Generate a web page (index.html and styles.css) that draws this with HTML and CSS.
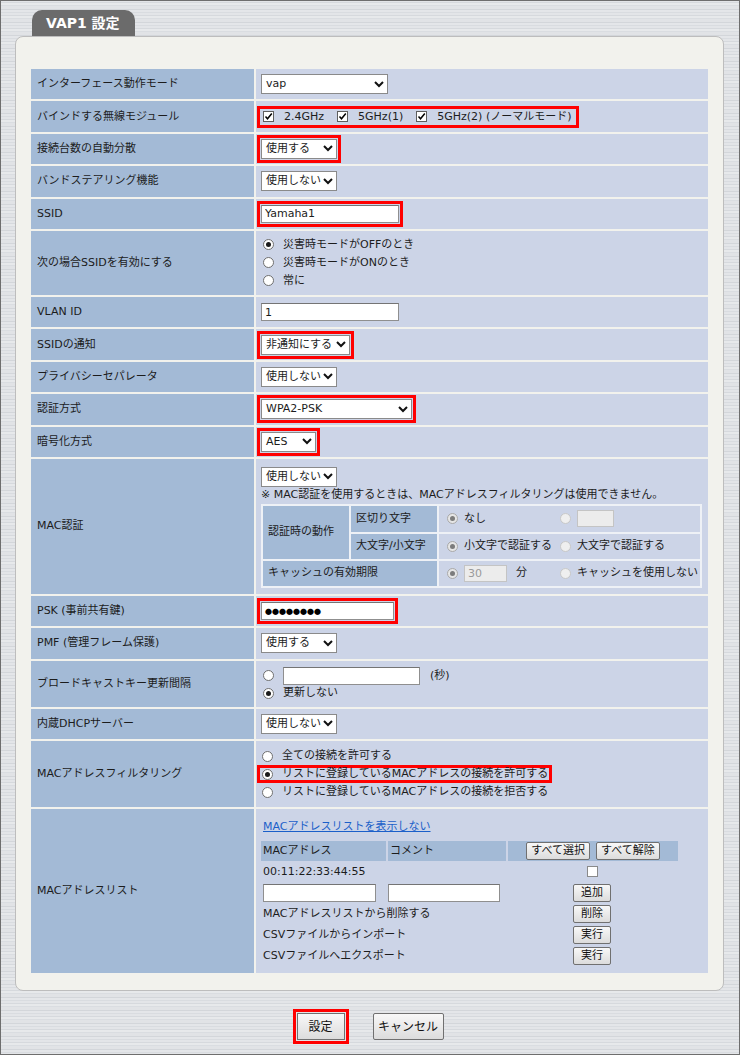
FILE: index.html
```html
<!DOCTYPE html>
<html lang="ja">
<head>
  <meta charset="UTF-8">
  <meta name="viewport" content="width=device-width, initial-scale=1">
  <title>VAP1 設定</title>
  <link rel="stylesheet" href="styles.css">
</head>
<body>

  <!-- タイトル -->
  <div class="tab">VAP1 設定</div>

  <div class="panel">
    <table class="form">
      <tr>
        <th>インターフェース動作モード</th>
        <td><span class="sel w127"><span>vap</span><svg class="chev" width="10" height="7" viewBox="0 0 10 7"><polyline points="1,1 5,5 9,1"/></svg></span></td>
      </tr>
      <tr>
        <th>バインドする無線モジュール</th>
        <td>
          <span class="group hl">
            <label class="chk"><span class="cb"><svg width="9" height="9" viewBox="0 0 9 9"><path d="M1.5 4.5 L3.5 6.8 L7.8 1.5"/></svg></span>2.4GHz</label>
            <label class="chk"><span class="cb"><svg width="9" height="9" viewBox="0 0 9 9"><path d="M1.5 4.5 L3.5 6.8 L7.8 1.5"/></svg></span>5GHz(1)</label>
            <label class="chk"><span class="cb"><svg width="9" height="9" viewBox="0 0 9 9"><path d="M1.5 4.5 L3.5 6.8 L7.8 1.5"/></svg></span>5GHz(2) (ノーマルモード)</label>
          </span>
        </td>
      </tr>
      <tr>
        <th>接続台数の自動分散</th>
        <td><span class="sel w76 hl"><span>使用する</span><svg class="chev" width="10" height="7" viewBox="0 0 10 7"><polyline points="1,1 5,5 9,1"/></svg></span></td>
      </tr>
      <tr>
        <th>バンドステアリング機能</th>
        <td><span class="sel w76"><span>使用しない</span><svg class="chev" width="10" height="7" viewBox="0 0 10 7"><polyline points="1,1 5,5 9,1"/></svg></span></td>
      </tr>
      <tr>
        <th>SSID</th>
        <td><input class="txt w138 hl" type="text" value="Yamaha1"></td>
      </tr>
      <tr>
        <th>次の場合SSIDを有効にする</th>
        <td class="multi">
          <div class="opt"><span class="rb on"></span>災害時モードがOFFのとき</div>
          <div class="opt"><span class="rb"></span>災害時モードがONのとき</div>
          <div class="opt"><span class="rb"></span>常に</div>
        </td>
      </tr>
      <tr>
        <th>VLAN ID</th>
        <td><input class="txt w138" type="text" value="1"></td>
      </tr>
      <tr>
        <th>SSIDの通知</th>
        <td><span class="sel w89 hl"><span>非通知にする</span><svg class="chev" width="10" height="7" viewBox="0 0 10 7"><polyline points="1,1 5,5 9,1"/></svg></span></td>
      </tr>
      <tr>
        <th>プライバシーセパレータ</th>
        <td><span class="sel w76"><span>使用しない</span><svg class="chev" width="10" height="7" viewBox="0 0 10 7"><polyline points="1,1 5,5 9,1"/></svg></span></td>
      </tr>
      <tr>
        <th>認証方式</th>
        <td><span class="sel w151 hl"><span>WPA2-PSK</span><svg class="chev" width="10" height="7" viewBox="0 0 10 7"><polyline points="1,1 5,5 9,1"/></svg></span></td>
      </tr>
      <tr>
        <th>暗号化方式</th>
        <td><span class="sel w55 hl"><span>AES</span><svg class="chev" width="10" height="7" viewBox="0 0 10 7"><polyline points="1,1 5,5 9,1"/></svg></span></td>
      </tr>
      <tr>
        <th>MAC認証</th>
        <td class="mac-auth">
          <span class="sel w76"><span>使用しない</span><svg class="chev" width="10" height="7" viewBox="0 0 10 7"><polyline points="1,1 5,5 9,1"/></svg></span>
          <p class="note">※ MAC認証を使用するときは、MACアドレスフィルタリングは使用できません。</p>
          <table class="sub">
            <tr class="first">
              <th class="c1" rowspan="2">認証時の動作</th>
              <th class="c2">区切り文字</th>
              <td>
                <div class="pair">
                  <span class="opt2"><span class="rb dis on"></span>なし</span>
                  <span class="opt2"><span class="rb dis"></span><input class="txt dis w37" type="text" disabled></span>
                </div>
              </td>
            </tr>
            <tr>
              <th class="c2">大文字/小文字</th>
              <td>
                <div class="pair">
                  <span class="opt2"><span class="rb dis on"></span>小文字で認証する</span>
                  <span class="opt2"><span class="rb dis"></span>大文字で認証する</span>
                </div>
              </td>
            </tr>
            <tr>
              <th colspan="2">キャッシュの有効期限</th>
              <td>
                <div class="pair">
                  <span class="opt2"><span class="rb dis on"></span><input class="txt dis w43" type="text" value="30" disabled><span class="unit">分</span></span>
                  <span class="opt2"><span class="rb dis"></span>キャッシュを使用しない</span>
                </div>
              </td>
            </tr>
          </table>
        </td>
      </tr>
      <tr>
        <th>PSK (事前共有鍵)</th>
        <td><span class="txt w133 hl pass"><span class="dots">●●●●●●●●</span></span></td>
      </tr>
      <tr>
        <th>PMF (管理フレーム保護)</th>
        <td><span class="sel w76"><span>使用する</span><svg class="chev" width="10" height="7" viewBox="0 0 10 7"><polyline points="1,1 5,5 9,1"/></svg></span></td>
      </tr>
      <tr>
        <th>ブロードキャストキー更新間隔</th>
        <td class="rekey">
          <div class="opt tall"><span class="rb"></span><input class="txt w137" type="text"><span class="unit-s">(秒)</span></div>
          <div class="opt short"><span class="rb on"></span>更新しない</div>
        </td>
      </tr>
      <tr>
        <th>内蔵DHCPサーバー</th>
        <td><span class="sel w76"><span>使用しない</span><svg class="chev" width="10" height="7" viewBox="0 0 10 7"><polyline points="1,1 5,5 9,1"/></svg></span></td>
      </tr>
      <tr>
        <th>MACアドレスフィルタリング</th>
        <td class="filter">
          <div class="opt"><span class="rb"></span>全ての接続を許可する</div>
          <div class="opt mark"><span class="rb on"></span>リストに登録しているMACアドレスの接続を許可する</div>
          <div class="opt"><span class="rb"></span>リストに登録しているMACアドレスの接続を拒否する</div>
        </td>
      </tr>
      <tr>
        <th>MACアドレスリスト</th>
        <td class="maclist">
          <a class="link" href="#">MACアドレスリストを表示しない</a>
          <table class="list">
            <tr>
              <th class="l1">MACアドレス</th>
              <th class="l2">コメント</th>
              <th class="l3"><button class="btn-h">すべて選択</button><button class="btn-h">すべて解除</button></th>
            </tr>
            <tr>
              <td>00:11:22:33:44:55</td>
              <td></td>
              <td class="ctr"><span class="cb plain"></span></td>
            </tr>
            <tr>
              <td><input class="txt w113" type="text"></td>
              <td><input class="txt w112" type="text"></td>
              <td class="ctr"><button class="btn-s">追加</button></td>
            </tr>
            <tr>
              <td colspan="2">MACアドレスリストから削除する</td>
              <td class="ctr"><button class="btn-s">削除</button></td>
            </tr>
            <tr>
              <td colspan="2">CSVファイルからインポート</td>
              <td class="ctr"><button class="btn-s">実行</button></td>
            </tr>
            <tr>
              <td colspan="2">CSVファイルへエクスポート</td>
              <td class="ctr"><button class="btn-s">実行</button></td>
            </tr>
          </table>
        </td>
      </tr>
    </table>
  </div>

  <div class="actions">
    <button class="btn-ok">設定</button>
    <button class="btn-cancel">キャンセル</button>
  </div>

</body>
</html>
```

FILE: styles.css
```css
* { margin: 0; padding: 0; box-sizing: border-box; }

body {
  width: 740px;
  height: 1055px;
  overflow: hidden;
  border: 1px solid #6e6e6e;
  font-family: "DejaVu Sans", "Noto Sans CJK JP", sans-serif;
  font-size: 11px;
  line-height: 14px;
  color: #1c1c1c;
  background-color: #dee1e4;
  background-image: repeating-linear-gradient(180deg,
    #e3e5e8 0 2px, #d6d9dd 2px 3px, #e7e9eb 3px 5px,
    #dadde1 5px 6px, #e1e3e6 6px 9px, #d3d6da 9px 10px,
    #e4e6e9 10px 12px, #d9dce0 12px 13px);
}

/* タブ */
.tab {
  margin: 9px 0 0 31px;
  width: 103px;
  height: 26px;
  padding-left: 14px;
  background-color: #6b6b6b;
  border-radius: 10px 10px 0 0;
  color: #fff;
  font-size: 14px;
  font-weight: bold;
  line-height: 27px;
}

.panel {
  margin-left: 14px;
  width: 709px;
  padding: 30px 13px 15px;
  background-color: #f2f2ed;
  border: 1px solid #bdbdbd;
  border-radius: 8px;
}

/* フォームテーブル */
.form {
  width: 681px;
  border-spacing: 2px;
}

.form > tbody > tr > th,
.form > tbody > tr > td {
  height: 30.4px;
}

.form > tbody > tr > th {
  width: 223px;
  padding: 0 6px;
  background-color: #a3bad6;
  font-weight: normal;
  text-align: left;
}

.form > tbody > tr > td {
  width: 452px;
  padding: 0 5px;
  background-color: #ccd4e7;
}

/* 赤枠 */
.hl {
  box-shadow: 0 0 0 1px #ccd4e7, 0 0 0 4px #f00;
}

/* セレクト */
.sel {
  display: inline-flex;
  align-items: center;
  justify-content: space-between;
  height: 20px;
  padding: 0 3px 0 4px;
  vertical-align: middle;
  background-color: #fff;
  border: 1px solid #8a8a8a;
  white-space: nowrap;
}

.chev polyline {
  fill: none;
  stroke: #111;
  stroke-width: 2;
}

.w55 { width: 55px; }
.w76 { width: 76px; }
.w89 { width: 89px; }
.w127 { width: 127px; }
.w151 { width: 151px; }
.w37 { width: 37px; }
.w43 { width: 43px; }
.w112 { width: 112px; }
.w113 { width: 113px; }
.w133 { width: 133px; }
.w137 { width: 137px; }
.w138 { width: 138px; }

/* テキスト入力 */
.txt {
  height: 18px;
  padding: 0 3px;
  font: inherit;
  color: #1c1c1c;
  vertical-align: middle;
  background-color: #fff;
  border: 1px solid #8f8f8f;
  border-top-color: #747474;
}

.txt.dis {
  height: 17px;
  color: #9a9a9a;
  background-color: #ececec;
  border-color: #c4c4c4;
}

.pass {
  display: inline-flex;
  align-items: center;
}

.dots {
  font-family: "Noto Sans CJK JP", sans-serif;
  font-size: 7px;
  line-height: 8px;
  color: #000;
}

/* チェックボックス */
.group {
  display: inline-flex;
  align-items: center;
  height: 14px;
  padding: 0 4px 0 2px;
  vertical-align: middle;
}

.chk {
  display: inline-flex;
  align-items: center;
  margin-right: 13px;
  white-space: nowrap;
}

.chk:last-child { margin-right: 0; }

.cb {
  display: inline-flex;
  align-items: center;
  justify-content: center;
  flex: none;
  width: 11px;
  height: 11px;
  margin-right: 10px;
  background-color: #fff;
  border: 1px solid #5e5e5e;
}

.cb path {
  fill: none;
  stroke: #000;
  stroke-width: 1.5;
}

.cb.plain {
  margin: 0;
  border-color: #8a8a8a;
}

/* ラジオボタン */
.rb {
  display: inline-flex;
  align-items: center;
  justify-content: center;
  flex: none;
  width: 11px;
  height: 11px;
  margin: 0 9px 0 2px;
  background-color: #fff;
  border: 1px solid #6f6f6f;
  border-radius: 50%;
}

.rb.on::after {
  content: '';
  width: 5px;
  height: 5px;
  border-radius: 50%;
  background-color: #1b1b1b;
}

.rb.dis {
  margin: 0 6px 0 0;
  background-color: #efefef;
  border-color: #c8c8c8;
}

.rb.dis.on {
  background-color: #e6e6e6;
  border-color: #a9a9a9;
}

.rb.dis.on::after { background-color: #7c7c7c; }

.opt {
  display: flex;
  align-items: center;
  height: 18px;
  width: fit-content;
  white-space: nowrap;
}

.form > tbody > tr > td.multi { padding: 5px 5px; }

.form > tbody > tr > td.rekey { padding: 6px 5px 5px; }
.opt.tall { height: 18px; }
.opt.short { height: 17px; }
.unit-s { margin-left: 10px; }

.form > tbody > tr > td.filter { padding: 6px 5px 6px 1px; }
.filter .opt { padding: 0 4px 0 3px; }

.opt.mark {
  box-shadow: inset 0 0 0 3px #f00;
}

/* MAC認証 */
.form > tbody > tr > td.mac-auth {
  padding: 8px 5px 6px;
  vertical-align: top;
}

.note {
  margin-top: 1px;
  line-height: 14px;
  white-space: nowrap;
}

.sub {
  width: 441px;
  margin-top: 2px;
  border-spacing: 2px;
  background-color: #eef1f6;
}

.sub th {
  height: 25px;
  padding-left: 5px;
  background-color: #a3bad6;
  font-weight: normal;
  text-align: left;
  white-space: nowrap;
}

.sub .first th,
.sub .first td { height: 26px; }

.sub .c1 { width: 86px; }
.sub .c2 { width: 86px; }

.sub td {
  height: 25px;
  padding-left: 8px;
  background-color: #ccd4e7;
}

.pair {
  display: grid;
  grid-template-columns: 113px auto;
  align-items: center;
}

.opt2 {
  display: flex;
  align-items: center;
  white-space: nowrap;
}

.unit { margin-left: 9px; }

/* MACアドレスリスト */
.form > tbody > tr > td.maclist {
  padding: 10px 5px 7px;
  vertical-align: top;
}

.link {
  display: block;
  width: fit-content;
  margin: 0 0 6px 2px;
  line-height: 16px;
  color: #1b5fc9;
  text-decoration: underline;
}

.list {
  width: 417px;
  table-layout: fixed;
  border-spacing: 0;
}

.list th {
  height: 20px;
  padding: 0 2px;
  background-color: #a3bad6;
  font-weight: normal;
  text-align: left;
  white-space: nowrap;
}

.list .l1 { width: 125px; }
.list .l2 { width: 120px; border-left: 2px solid #ccd4e7; }
.list .l3 { width: 172px; border-left: 2px solid #ccd4e7; text-align: center; }

.list td {
  height: 21px;
  padding: 0 2px;
  white-space: nowrap;
}

.list .ctr {
  text-align: center;
  line-height: 0;
}

.list .ctr .cb { vertical-align: middle; }

/* ボタン */
button {
  font: inherit;
  color: #111;
  background: linear-gradient(#f8f8f8, #dcdcdc);
  border: 1px solid #707070;
  border-radius: 2px;
  cursor: pointer;
}

.btn-s,
.btn-h {
  height: 18px;
  line-height: 16px;
  vertical-align: middle;
}

.btn-s { padding: 0 7px; }

.btn-h {
  padding: 0 4px;
  margin: 0 3px;
}

.actions {
  display: flex;
  justify-content: center;
  gap: 28px;
  margin-top: 22px;
}

.actions button {
  height: 27px;
  font-size: 12px;
}

.btn-ok {
  width: 48px;
  border-radius: 0;
  box-shadow: 0 0 0 1px #e2e4e7, 0 0 0 4px #f00;
}

.btn-cancel { width: 71px; }
```
